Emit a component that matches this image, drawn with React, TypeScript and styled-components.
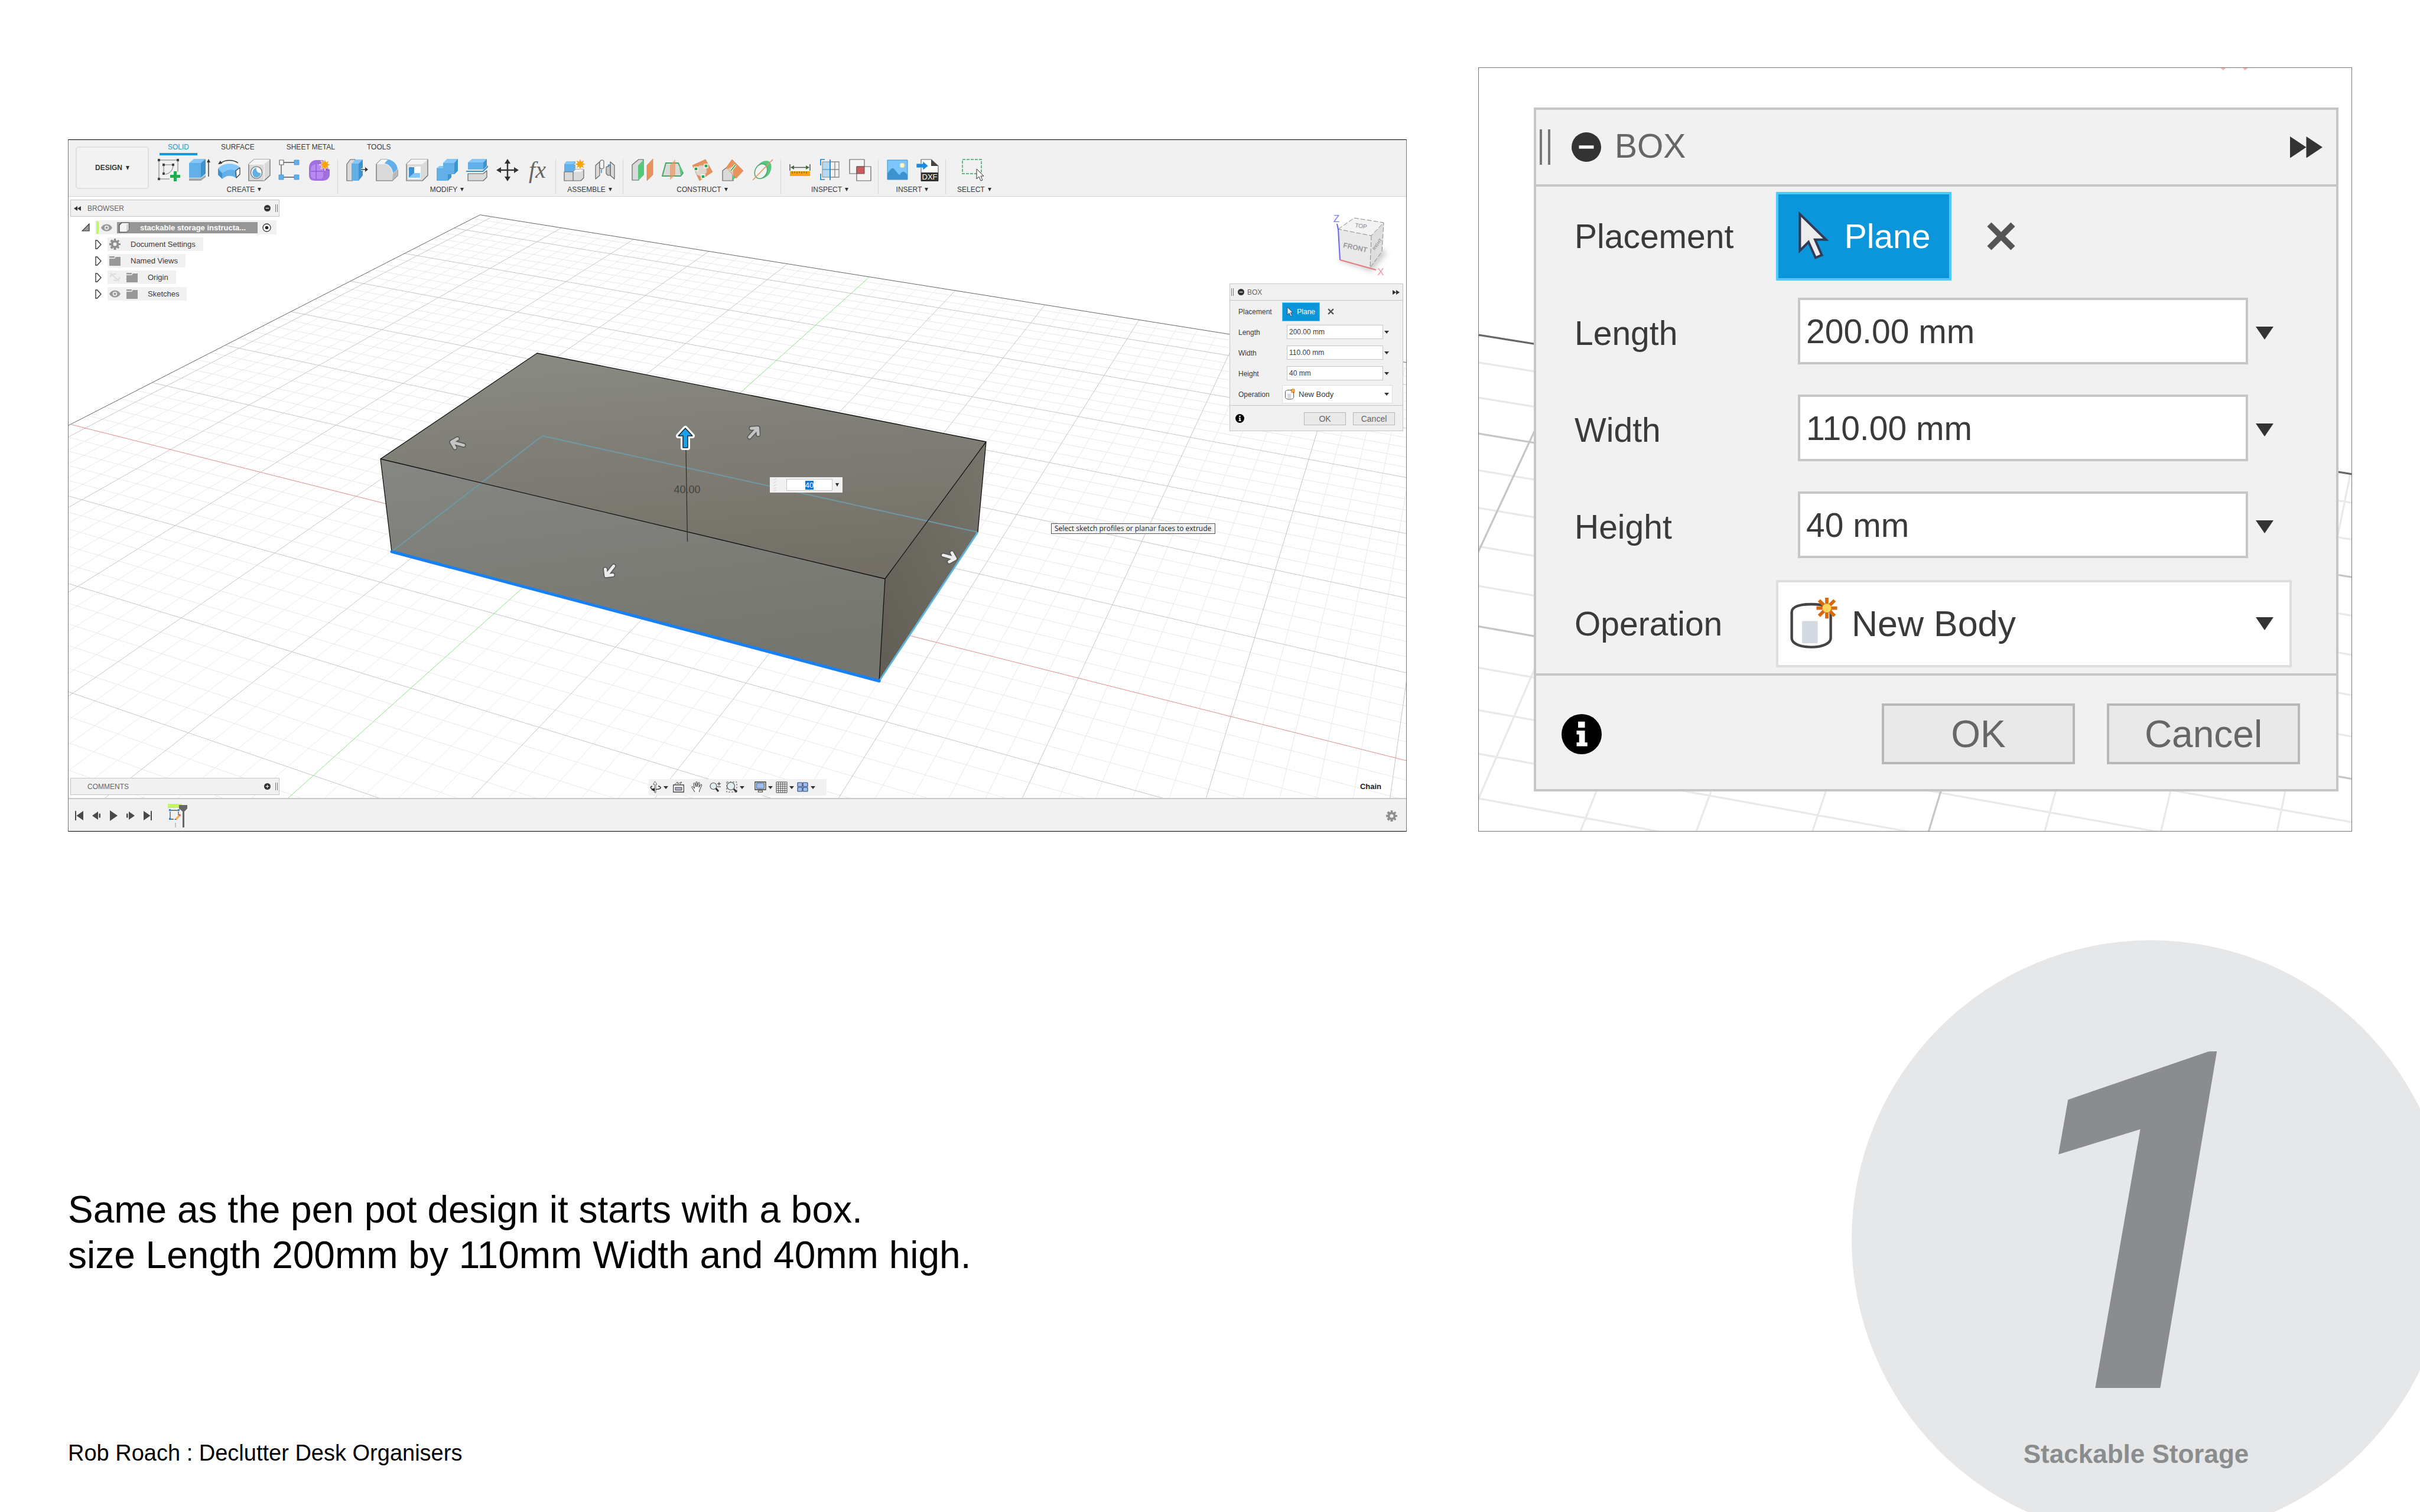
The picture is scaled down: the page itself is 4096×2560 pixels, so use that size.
import React, { useEffect, useId, useRef } from "react";
import styled, { createGlobalStyle } from "styled-components";

const GlobalStyle = createGlobalStyle`
  *, *::before, *::after { box-sizing: border-box; }
  html, body { margin: 0; background: #fff; }
  body { font-family: "Liberation Sans", Arial, sans-serif; color: #333; }
  button, input, select { font-family: inherit; color: inherit; margin: 0; }
  h1, h2, p, ul { margin: 0; padding: 0; font-weight: normal; }
  svg { display: block; }
`;

const color = {
  panel: "#f1f1f1",
  line: "#c6c6c6",
  ink: "#3a3a3a",
  blue: "#0b96db",
  icon: "#63b0e8",
  iconDark: "#3d93cf",
  iconLight: "#84c8fb",
  outline: "#666",
  fill: "#dadada",
  pale: "#f4f4f4",
  green: "#58c77e",
  orange: "#e8935c",
};

/* ------------------------------------------------------------------ slide */

const Slide = styled.main`
  position: relative;
  display: flex;
  flex-direction: column;
  min-height: 100vh;
  padding: 114px 115px 78px;
  overflow: hidden;
  background: #fff;
  color: #000;
`;

const Figures = styled.section`
  display: grid;
  grid-template-columns: 2266fr 1479fr;
  gap: 121px;
  align-items: end;
`;

const Caption = styled.p`
  margin-top: 602px;
  font-size: 64px;
  line-height: 77px;
`;

const Credit = styled.footer`
  margin-top: auto;
  font-size: 38px;
  line-height: 44px;
`;

const StepBadge = styled.aside`
  position: absolute;
  right: -51px;
  bottom: -45px;
  display: flex;
  flex-direction: column;
  align-items: center;
  width: 1013px;
  height: 1013px;
  padding: 125px 50px 0 0;
  border-radius: 50%;
  background: #e5e7e9;
  color: #8b8c8e;
  font-weight: bold;
`;

const StepNumber = styled.span`
  font-family: Roboto, Arial, sans-serif;
  font-size: 800px;
  font-style: italic;
  line-height: 720px;
`;

const StepTitle = styled.span`
  font-size: 44px;
  line-height: 50px;
`;

/* ---------------------------------------------------------- app window */

const AppWindow = styled.div`
  display: flex;
  flex-direction: column;
  aspect-ratio: 2266 / 1172;
  border: 1px solid #777;
  border-top-color: #000;
  border-bottom-color: #000;
  color: ${color.ink};
  font-size: 12px;
`;

const Toolbar = styled.header`
  display: flex;
  gap: 8px;
  height: 96px;
  padding-left: 12px;
  border-bottom: 1px solid #d4d4d4;
  background: ${color.panel};
`;

const WorkspaceButton = styled.button`
  display: flex;
  align-items: center;
  justify-content: center;
  gap: 6px;
  width: 124px;
  height: 72px;
  margin-top: 11px;
  border: 2px solid #e0e0e0;
  border-radius: 5px;
  background: #f3f3f3;
  font-size: 12px;
  font-weight: bold;
`;

const Ribbon = styled.div`
  display: flex;
  flex-direction: column;
`;

const Tabs = styled.nav`
  display: flex;
  gap: 26px;
  height: 26px;
  margin-bottom: 6px;
  padding-left: 10px;
`;

const Tab = styled.button<{ $active?: boolean }>`
  padding: 2px 14px 0;
  border: 0;
  border-bottom: 4px solid ${(p) => (p.$active ? "#1f96cf" : "transparent")};
  background: none;
  font-size: 12px;
  line-height: 20px;
  color: ${(p) => (p.$active ? "#1f96cf" : color.ink)};
`;

const Groups = styled.div`
  display: flex;
`;

const Group = styled.div`
  display: flex;
  flex-direction: column;
  height: 60px;
  padding: 0 5px 0 6px;
  border-right: 1px solid #d6d6d6;
  &:first-child { padding-left: 0; }
  &:last-child { border-right: 0; padding: 0 19px; }
`;

const GroupIcons = styled.div`
  display: flex;
`;

const ToolButton = styled.button`
  display: grid;
  place-items: center;
  width: 51px;
  height: 38px;
  padding: 0;
  border: 0;
  background: none;
`;

const GroupMenu = styled.button`
  display: flex;
  align-items: center;
  justify-content: center;
  gap: 5px;
  height: 22px;
  margin-top: 4px;
  padding: 0;
  border: 0;
  background: none;
  font-size: 12px;
  line-height: 20px;
  white-space: nowrap;
`;

const Caret = styled.i<{ $w?: number; $h?: number }>`
  width: 0;
  height: 0;
  border: solid transparent;
  border-width: ${(p) => p.$h ?? 6}px ${(p) => (p.$w ?? 6) / 2}px 0;
  border-top-color: #333;
`;

const Canvas = styled.div`
  position: relative;
  flex: 1;
  min-height: 0;
  overflow: hidden;
  background: #fff;
`;

const SceneSvg = styled.svg`
  position: absolute;
  inset: 0;
  width: 100%;
  height: 100%;
`;

const SideDock = styled.div`
  position: absolute;
  inset: 5px auto 5px 3px;
  display: flex;
  flex-direction: column;
  justify-content: space-between;
  width: 354px;
`;

const DockBar = styled.div`
  display: flex;
  align-items: center;
  height: 29px;
  padding: 0 2px 0 5px;
  border: 1px solid ${color.line};
  background: ${color.panel};
`;

const DockTitle = styled.span`
  flex: 1;
  color: #666;
`;

const DockLead = styled.span`
  display: flex;
  width: 23px;
`;

const PlainButton = styled.button`
  display: grid;
  place-items: center;
  padding: 0;
  border: 0;
  background: none;
`;

const Tree = styled.ul`
  display: flex;
  flex-direction: column;
  gap: 5px;
  margin-top: 6px;
  list-style: none;
  font-size: 13px;
`;

const TreeRow = styled.li<{ $root?: boolean }>`
  display: flex;
  align-items: center;
  gap: ${(p) => (p.$root ? 9 : 10)}px;
  height: ${(p) => (p.$root ? 24 : 23)}px;
  padding-left: ${(p) => (p.$root ? 19 : 42)}px;
`;

const RootItem = styled.div`
  display: flex;
  align-items: center;
  gap: 8px;
  height: 24px;
  padding-right: 9px;
  background: ${color.panel};
`;

const ActiveMark = styled.span`
  width: 4px;
  height: 21px;
  background: #c4f26b;
  margin: 0 -4px 0 2px;
`;

const RootLabel = styled.span`
  display: flex;
  align-items: center;
  gap: 18px;
  width: 238px;
  height: 19px;
  padding-left: 3px;
  background: #969696;
  color: #fff;
  font-weight: bold;
  white-space: nowrap;
`;

const TreeItem = styled.div`
  display: flex;
  align-items: center;
  height: 23px;
  gap: 10px;
  padding: 0 13px 0 3px;
  background: ${color.panel};
`;

const TreeText = styled.span`
  padding-left: 7px;
`;

const DialogSpot = styled.div`
  position: absolute;
  top: 147px;
  right: 5px;
  width: 294px;
`;

const NavDock = styled.div`
  position: absolute;
  right: 0;
  bottom: 4px;
  left: 0;
  display: flex;
  justify-content: center;
`;

const NavBar = styled.div`
  display: flex;
  align-items: center;
  height: 28px;
  padding: 0 16px 0 0;
  background: ${color.panel};
`;

const NavButton = styled.button<{ $menu?: boolean }>`
  display: flex;
  align-items: center;
  gap: ${(p) => (p.$menu ? 3 : 0)}px;
  justify-content: center;
  width: ${(p) => (p.$menu ? 36 : 31)}px;
  padding: 0;
  border: 0;
  background: none;
`;

const NavGap = styled.span`
  width: 12px;
`;

const SelectionHint = styled.span`
  position: absolute;
  right: 42px;
  bottom: 10px;
  font-size: 13px;
  line-height: 18px;
  font-weight: bold;
  color: #222;
`;

const Tooltip = styled.span`
  position: absolute;
  top: 553px;
  left: 1663px;
  padding: 0 6px 0 5px;
  border: 1px solid #555;
  background: #f2f2f2;
  color: #222;
  font-family: "Open Sans", "Noto Sans", sans-serif;
  font-size: 12px;
  line-height: 16px;
  white-space: nowrap;
`;

const FloatingValue = styled.label`
  position: absolute;
  top: 475px;
  left: 1187px;
  display: flex;
  align-items: center;
  gap: 5px;
  width: 123px;
  height: 26px;
  padding-left: 4px;
  background: ${color.panel};
`;

const FloatingInput = styled.input`
  width: 78px;
  height: 20px;
  margin-left: 10px;
  padding: 0;
  border: 1px solid #c8c8c8;
  outline: 0;
  background: #fff;
  font-size: 13px;
  text-align: center;
  &::selection { background: #0a78d7; color: #fff; }
`;

const Timeline = styled.footer`
  display: flex;
  align-items: center;
  height: 56px;
  padding: 2px 15px 0 3px;
  border-top: 2px solid #c8c8c8;
  background: ${color.panel};
`;

const PlayButton = styled(PlainButton)`
  width: 29px;
  height: 30px;
`;

const TimelineTrack = styled.div`
  flex: 1;
  padding-left: 20px;
`;

/* -------------------------------------------------------------- detail */

const Detail = styled.div`
  position: relative;
  overflow: hidden;
  padding: 67px 22px 67px 93px;
  border: 1px solid #777;
  background: #fff;
  color: ${color.ink};
`;

const DetailFront = styled.div`
  position: relative;
`;

/* -------------------------------------------------------------- dialog */

type Metrics = {
  text: number; option: number; action: number; line: number;
  header: number; headPad: number; gripW: number; gripH: number; gripGap: number;
  dot: number; titleGap: number; titleLift: number; arrows: number; arrowsRight: number;
  row: number; bodyPad: number; labelPad: number; label: number; indent: number;
  input: number; inputPad: number; inputLift: number; caretBox: number; caretW: number; caretH: number;
  inputRight: number; selectRight: number; select: number; selectPad: number; selectIcon: number; selectGap: number; caretRight: number;
  planeW: number; planeH: number; pointer: number; planeGap: number; clearGap: number; clear: number;
  footer: number; footTop: number; info: number; footLeft: number; footRight: number; buttonW: number; buttonH: number; buttonGap: number;
};

const compact: Metrics = {
  text: 12, option: 13, action: 14, line: 1,
  header: 28, headPad: 2, gripW: 4, gripH: 13, gripGap: 7,
  dot: 11, titleGap: 5, titleLift: 0, arrows: 12, arrowsRight: 5,
  row: 35, bodyPad: 1, labelPad: 14, label: 74, indent: 8,
  input: 24, inputPad: 3, inputLift: 1, caretBox: 12, caretW: 8, caretH: 5,
  inputRight: 21, selectRight: 17, select: 31, selectPad: 3, selectIcon: 19, selectGap: 5, caretRight: 5,
  planeW: 64, planeH: 32, pointer: 18, planeGap: 6, clearGap: 13, clear: 11,
  footer: 42, footTop: 1, info: 15, footLeft: 9, footRight: 13, buttonW: 71, buttonH: 22, buttonGap: 12,
};

const enlarged: Metrics = {
  text: 57, option: 61, action: 64, line: 4,
  header: 130, headPad: 6, gripW: 18, gripH: 60, gripGap: 36,
  dot: 50, titleGap: 23, titleLift: 4, arrows: 55, arrowsRight: 23,
  row: 164, bodyPad: 2, labelPad: 65, label: 341, indent: 37,
  input: 113, inputPad: 10, inputLift: 7, caretBox: 56, caretW: 30, caretH: 22,
  inputRight: 93, selectRight: 75, select: 148, selectPad: 16, selectIcon: 88, selectGap: 20, caretRight: 27,
  planeW: 297, planeH: 150, pointer: 84, planeGap: 27, clearGap: 59, clear: 50,
  footer: 192, footTop: 5, info: 68, footLeft: 43, footRight: 61, buttonW: 327, buttonH: 103, buttonGap: 54,
};

type M = { $m: Metrics };

const DialogFrame = styled.form<M>`
  border: ${(p) => p.$m.line}px solid ${color.line};
  background: ${color.panel};
  font-size: ${(p) => p.$m.text}px;
`;

const DialogHeader = styled.div<M>`
  display: flex;
  align-items: center;
  height: ${(p) => p.$m.header}px;
  padding: 0 ${(p) => p.$m.arrowsRight}px 0 ${(p) => p.$m.headPad}px;
  border-bottom: ${(p) => p.$m.line}px solid ${color.line};
`;

const Grip = styled.span<{ $w: number; $h: number; $line: number; $gap: number }>`
  width: ${(p) => p.$w}px;
  height: ${(p) => p.$h}px;
  margin-right: ${(p) => p.$gap}px;
  border: solid #777;
  border-width: 0 ${(p) => p.$line}px;
`;

const DialogTitle = styled.h2<M>`
  flex: 1;
  margin-left: ${(p) => p.$m.titleGap}px;
  padding-bottom: ${(p) => p.$m.titleLift}px;
  font-size: ${(p) => p.$m.text}px;
  color: #666;
`;

const DialogBody = styled.div<M>`
  padding: ${(p) => p.$m.bodyPad}px 0;
  border-bottom: ${(p) => p.$m.line}px solid ${color.line};
`;

const FieldRow = styled.div<M & { $right: number }>`
  display: flex;
  align-items: center;
  height: ${(p) => p.$m.row}px;
  padding: 0 ${(p) => p.$right}px 0 ${(p) => p.$m.labelPad}px;
`;

const FieldLabel = styled.label<M>`
  flex: none;
  width: ${(p) => p.$m.label}px;
`;

const PlaneButton = styled.button<M>`
  display: flex;
  align-items: center;
  justify-content: center;
  gap: ${(p) => p.$m.planeGap}px;
  width: ${(p) => p.$m.planeW}px;
  height: ${(p) => p.$m.planeH}px;
  padding: 0;
  border: ${(p) => p.$m.line}px solid #55c8fb;
  background: ${color.blue};
  color: #fff;
  font-size: ${(p) => p.$m.text}px;
`;

const ClearButton = styled(PlainButton)<M>`
  margin-left: ${(p) => p.$m.clearGap}px;
`;

const ValueInput = styled.input<M>`
  flex: 1;
  min-width: 0;
  height: ${(p) => p.$m.input}px;
  margin: 0 0 ${(p) => p.$m.inputLift}px ${(p) => p.$m.indent}px;
  padding: 0 ${(p) => p.$m.inputPad}px;
  border: ${(p) => p.$m.line}px solid ${color.line};
  background: #fff;
  font-size: ${(p) => p.$m.text}px;
`;

const CaretButton = styled(PlainButton)<M>`
  width: ${(p) => p.$m.caretBox}px;
  height: ${(p) => p.$m.input}px;
`;

const SelectBox = styled.div<M>`
  display: flex;
  flex: 1;
  align-items: center;
  gap: ${(p) => p.$m.selectGap}px;
  height: ${(p) => p.$m.select}px;
  padding: 0 ${(p) => p.$m.caretRight}px 0 ${(p) => p.$m.selectPad}px;
  border: ${(p) => p.$m.line}px solid #dedede;
  background: #fff;
`;

const OptionSelect = styled.select<M>`
  flex: 1;
  min-width: 0;
  padding: 0;
  border: 0;
  background: none;
  appearance: none;
  font-size: ${(p) => p.$m.option}px;
`;

const DialogFooter = styled.div<M>`
  display: flex;
  align-items: center;
  gap: ${(p) => p.$m.buttonGap}px;
  height: ${(p) => p.$m.footer}px;
  padding: ${(p) => p.$m.footTop}px ${(p) => p.$m.footRight}px 0 ${(p) => p.$m.footLeft}px;
`;

const InfoSlot = styled.span`
  flex: 1;
`;

const ActionButton = styled.button<M>`
  width: ${(p) => p.$m.buttonW}px;
  height: ${(p) => p.$m.buttonH}px;
  padding: 0;
  border: ${(p) => p.$m.line}px solid #b8b8b8;
  background: #e9e9e9;
  color: #666;
  font-size: ${(p) => p.$m.action}px;
  line-height: 1;
`;

const Dot = ({ size, sign, fill = "#333" }: { size: number; sign: "+" | "-"; fill?: string }) => (
  <svg width={size} height={size} viewBox="0 0 12 12">
    <circle cx="6" cy="6" r="6" fill={fill} />
    <path d={sign === "+" ? "M3 6h6M6 3v6" : "M3 6h6"} stroke="#fff" strokeWidth="1.3" />
  </svg>
);

const Info = ({ size }: { size: number }) => (
  <svg width={size} height={size} viewBox="0 0 16 16">
    <circle cx="8" cy="8" r="8" fill="#000" />
    <path d="M6.6 3h2.7v2.4H6.6zM6 6.6h3.3v4.7h1v1.5H6v-1.5h1V8.1H6z" fill="#fff" />
  </svg>
);

const Pointer = ({ size }: { size: number }) => (
  <svg width={(size * 12) / 19} height={size} viewBox="0 0 12 19">
    <path d="M1 1v14l3.300-3.300 2.700 6 2.400-1-2.600-5.900H11z" fill="#ececec" stroke="#333a55" strokeWidth=".9" />
  </svg>
);

const NewBody = ({ size }: { size: number }) => (
  <svg width={size} height={size} viewBox="0 0 19 20">
    <path d="M1 5.500C1 3.500 4 2.500 8.500 2.500S16 3.500 16 5.500v10c0 2-3 3.500-7.500 3.500S1 17.500 1 15.500z" fill="#fff" stroke="#444" strokeWidth="1" />
    <path d="M5 9h6v8.500H5z" fill="#d5d9e2" />
    <path d="M14.500 0v8M10.500 4h8M11.500 1l6 6M17.500 1l-6 6" stroke="#d9690a" strokeWidth="1.300" />
    <circle cx="14.500" cy="4" r="1.700" fill="#ffd35c" />
  </svg>
);

const DoubleArrow = ({ size, flip }: { size: number; flip?: boolean }) => (
  <svg width={size} height={(size * 8) / 12} viewBox="0 0 12 8">
    <path d={flip ? "M6 0v8L0 4zM12 0v8L6 4z" : "M0 0v8l6-4zM6 0v8l6-4z"} fill="#333" />
  </svg>
);

function BoxDialog({ m }: { m: Metrics }) {
  const id = useId();
  const values = [
    ["Length", "200.00 mm"],
    ["Width", "110.00 mm"],
    ["Height", "40 mm"],
  ];
  return (
    <DialogFrame $m={m} onSubmit={(e) => e.preventDefault()}>
      <DialogHeader $m={m}>
        <Grip $w={m.gripW} $h={m.gripH} $line={m.line} $gap={m.gripGap} />
        <PlainButton type="button" aria-label="Collapse"><Dot size={m.dot} sign="-" /></PlainButton>
        <DialogTitle $m={m}>BOX</DialogTitle>
        <PlainButton type="button" aria-label="Expand"><DoubleArrow size={m.arrows} /></PlainButton>
      </DialogHeader>
      <DialogBody $m={m}>
        <FieldRow $m={m} $right={m.selectRight}>
          <FieldLabel $m={m} htmlFor={`${id}-plane`}>Placement</FieldLabel>
          <PlaneButton $m={m} id={`${id}-plane`} type="button"><Pointer size={m.pointer} />Plane</PlaneButton>
          <ClearButton $m={m} type="button" aria-label="Clear placement">
            <svg width={m.clear} height={m.clear} viewBox="0 0 10 10"><path d="M1 1l8 8M9 1l-8 8" stroke="#555" strokeWidth="2" /></svg>
          </ClearButton>
        </FieldRow>
        {values.map(([name, value]) => (
          <FieldRow $m={m} $right={m.inputRight} key={name}>
            <FieldLabel $m={m} htmlFor={`${id}-${name}`}>{name}</FieldLabel>
            <ValueInput $m={m} id={`${id}-${name}`} defaultValue={value} />
            <CaretButton $m={m} type="button" aria-label={`${name} options`}><Caret $w={m.caretW} $h={m.caretH} /></CaretButton>
          </FieldRow>
        ))}
        <FieldRow $m={m} $right={m.selectRight}>
          <FieldLabel $m={m} htmlFor={`${id}-op`}>Operation</FieldLabel>
          <SelectBox $m={m}>
            <NewBody size={m.selectIcon} />
            <OptionSelect $m={m} id={`${id}-op`}><option>New Body</option></OptionSelect>
            <Caret $w={m.caretW} $h={m.caretH} />
          </SelectBox>
        </FieldRow>
      </DialogBody>
      <DialogFooter $m={m}>
        <InfoSlot><Info size={m.info} /></InfoSlot>
        <ActionButton $m={m} type="submit">OK</ActionButton>
        <ActionButton $m={m} type="button">Cancel</ActionButton>
      </DialogFooter>
    </DialogFrame>
  );
}

/* --------------------------------------------------------------- scene */

/* Perspective of the ground plane; x and y are millimetres from the origin. */
const ground = (x: number, y: number): [number, number] => {
  const u = (x + 60) / 200;
  const v = (y + 30) / 110;
  const w = -0.12904 * u + 0.15034 * v + 1;
  return [
    (633.58 * u + 393.97 * v + 662.5) / w,
    (70.7 * u - 84.42 * v + 933.6) / w,
  ];
};

const segment = (x1: number, y1: number, x2: number, y2: number) => {
  const a = ground(x1, y1);
  const b = ground(x2, y2);
  return `M${a[0].toFixed(1)} ${a[1].toFixed(1)}L${b[0].toFixed(1)} ${b[1].toFixed(1)}`;
};

const EDGE = { left: -259, right: 420, back: 328, front: -210 };

const gridLines = (major: boolean) => {
  const d: string[] = [];
  for (let x = -250; x <= EDGE.right; x += 10) {
    if (x !== 0 && (x % 50 === 0) === major) d.push(segment(x, EDGE.front, x, EDGE.back));
  }
  for (let y = -200; y <= EDGE.back; y += 10) {
    if (y !== 0 && (y % 50 === 0) === major) d.push(segment(EDGE.left, y, EDGE.right, y));
  }
  return d.join("");
};

const MINOR = gridLines(false);
const MAJOR = gridLines(true);

const Ground = ({ weight }: { weight: number }) => (
  <g fill="none" strokeWidth={weight}>
    <path d={MINOR} stroke="#e9e9e9" />
    <path d={MAJOR} stroke="#c6c6c6" />
    <path d={segment(EDGE.left, EDGE.front, EDGE.left, EDGE.back) + segment(EDGE.left, EDGE.back, EDGE.right, EDGE.back)} stroke="#666" />
    <path d={segment(EDGE.left, 0, EDGE.right, 0)} stroke="#e58c8c" />
    <path d={segment(0, EDGE.front, 0, EDGE.back)} stroke="#86e286" />
  </g>
);

const AxisX = () => <text x="2337" y="466" textAnchor="middle" fontSize="17" fill="#f5989c">X</text>;

const Handle = ({ x, y, angle, tone = "#ececec" }: { x: number; y: number; angle: number; tone?: string }) => (
  <g transform={`translate(${x} ${y}) rotate(${angle})`} fill="none" strokeLinecap="round" strokeLinejoin="round">
    <path d="M-11 0H10M2-8L10 0L2 8" stroke="#555" strokeWidth="8" />
    <path d="M-11 0H10M2-8L10 0L2 8" stroke={tone} strokeWidth="5" />
  </g>
);

function ModelScene() {
  return (
    <SceneSvg viewBox="116 333 2264 1018" preserveAspectRatio="none">
      <defs>
        <linearGradient id="face-top" x1="0.3" y1="0" x2="0.5" y2="1">
          <stop offset="0" stopColor="#898a82" /><stop offset="1" stopColor="#736f66" />
        </linearGradient>
        <linearGradient id="face-front" x1="0" y1="0" x2="0.3" y2="1">
          <stop offset="0" stopColor="#858782" /><stop offset="1" stopColor="#75766f" />
        </linearGradient>
        <linearGradient id="face-side" x1="1" y1="0" x2="0" y2="1">
          <stop offset="0" stopColor="#78756c" /><stop offset="1" stopColor="#615d54" />
        </linearGradient>
        <filter id="cube-shadow" x="-50%" y="-50%" width="200%" height="200%"><feGaussianBlur stdDeviation="4" /></filter>
      </defs>
      <Ground weight={1} />

      <g strokeLinejoin="round">
        <path d="M644 777L909 598L1669 748L1498 980Z" fill="url(#face-top)" />
        <path d="M644 777L1498 980L1488 1153L663 934Z" fill="url(#face-front)" />
        <path d="M1498 980L1669 748L1655 901L1488 1153Z" fill="url(#face-side)" />
        <path d="M663 934L918 738L1655 901" fill="none" stroke="#6f9aa5" strokeWidth="2" />
        <path d="M663 934L644 777L909 598L1669 748L1655 901M644 777L1498 980L1669 748M1498 980L1488 1153" fill="none" stroke="#111" strokeWidth="1.300" />
        <path d="M1488 1153L1655 901" stroke="#5db4dd" strokeWidth="3" />
        <path d="M663 934L1488 1153" stroke="#1680f4" strokeWidth="5" strokeLinecap="round" />
      </g>
      <path d="M1161 762L1163.500 917" stroke="#2c2a26" strokeWidth="1.200" />
      <text x="1163" y="835" textAnchor="middle" fontSize="18" fill="#45433d">40.00</text>
      <Handle x={774} y={751} angle={195} tone="#c4c4c2" />
      <Handle x={1032} y={967} angle={128} />
      <Handle x={1276} y={732} angle={-48} tone="#c4c4c2" />
      <Handle x={1607} y={943} angle={16} />
      <g strokeLinejoin="round" transform="translate(1160 741)">
        <path d="M0-16L12-3H4V17H-4V-3H-12Z" stroke="#fff" strokeWidth="8" fill="#fff" />
        <path d="M0-16L12-3H4V17H-4V-3H-12Z" fill="#18a0e8" stroke="#222" strokeWidth="1.500" />
      </g>

      <g>
        <path d="M2262 440L2322 460L2348 428L2330 418Z" fill="#bbb" opacity=".7" filter="url(#cube-shadow)" />
        <path d="M2265 388L2292 369L2342 377L2321 399Z" fill="#f3f3f3" />
        <path d="M2265 388L2321 399L2319 453L2268 440Z" fill="#e9e9ea" />
        <path d="M2321 399L2342 377L2339 426L2319 453Z" fill="#dedede" />
        <path d="M2265 388L2292 369L2342 377L2321 399ZM2321 399L2319 453L2339 426L2342 377" fill="none" stroke="#8a8a8a" strokeDasharray="8 3" />
        <path d="M2263 379L2265 388L2268 440" fill="none" stroke="#6a66ea" strokeWidth="2" />
        <path d="M2268 440L2329 457" stroke="#e8777c" strokeWidth="2" />
        <text x="2262" y="376" textAnchor="middle" fontSize="17" fill="#8380f2">Z</text>
        <AxisX />
        <text transform="translate(2293 423) rotate(12)" textAnchor="middle" fontSize="12" fontWeight="bold" fill="#9a9a9c">FRONT</text>
        <text transform="translate(2303 386) rotate(9)" textAnchor="middle" fontSize="10" fill="#888">TOP</text>
        <text transform="translate(2333 415) rotate(-55)" textAnchor="middle" fontSize="7" fontWeight="bold" fill="#999">RIGHT</text>
      </g>
    </SceneSvg>
  );
}

const DetailScene = () => (
  <SceneSvg viewBox="2060.6 464.9 319.3 279.3" preserveAspectRatio="none">
    <Ground weight={0.7} />
    <path d="M2332 464L2337 468M2342 464L2337 468" stroke="#f5b5b8" strokeWidth="1.500" strokeDasharray="2 9" />
  </SceneSvg>
);

/* --------------------------------------------------------------- icons */

const burst = (cx: number, cy: number, r: number) =>
  Array.from({ length: 16 }, (_, i) => {
    const rad = i % 2 ? r * 0.5 : r;
    const a = (i * Math.PI) / 8;
    return `${(cx + rad * Math.sin(a)).toFixed(1)},${(cy - rad * Math.cos(a)).toFixed(1)}`;
  }).join(" ");

const o = { stroke: color.outline, strokeWidth: 1.2, strokeLinejoin: "round" as const };

const icons: Record<string, React.ReactNode> = {
  sketch: (
    <g>
      <path d="M4 2H33M2 4V33M34 4V22M4 34H20" fill="none" stroke="#777" />
      <path d="M10 12V24M12 10H24M26 12C25 20 20 25 13 26" fill="none" stroke="#777" />
      <path d="M0 0h4v4H0zM32 0h4v4H32zM0 32h4v4H0zM8 8h4v4H8zM24 8h4v4H24zM8 23h4v4H8z" fill="#444" />
      <path d="M27 21h5v6h6v5H32v6H27V32H21V27h6z" fill="#22ab52" />
    </g>
  ),
  extrude: (
    <g>
      <path d="M2 33H22L30 27V31L22 37H2Z" fill="#a5a5a5" />
      <path d="M2 7L10 0H30L22 7Z" fill={color.iconLight} />
      <path d="M2 7H22V32H2Z" fill={color.icon} />
      <path d="M22 7L30 0V25L22 32Z" fill={color.iconDark} />
      <path d="M35 4V30" stroke="#333" strokeWidth="1.400" /><path d="M35 0L38 6H32Z" fill="#333" />
    </g>
  ),
  revolve: (
    <g>
      <path d="M5 7C12 1 26 1 34 7" fill="none" stroke="#333" strokeWidth="1.400" /><path d="M0 9L4 3L7 8Z" fill="#333" />
      <path d="M0 16C9 6 28 6 37 14L30 22C22 17 14 18 7 24Z" fill={color.iconLight} />
      <path d="M0 16L7 24V34L0 27Z" fill={color.iconDark} /><path d="M7 24C14 18 22 17 30 20V32C22 27 14 28 7 34Z" fill={color.icon} />
      <path d="M30 20L37 15V26L31 32Z" fill="#fff" {...o} stroke="#333" />
    </g>
  ),
  hole: (
    <g>
      <path d="M1 9L10 1H37V28L27 37H1Z" fill={color.fill} {...o} />
      <path d="M1 9L10 1H37L27 9Z" fill={color.pale} /><path d="M1 9H27V37" fill="none" stroke="#fff" />
      <ellipse cx="14" cy="23" rx="9.500" ry="10" fill="#fff" {...o} />
      <path d="M14 15C6 17 5 27 11 31C17 33 22 28 21 24C16 24 13 20 14 15Z" fill={color.icon} />
    </g>
  ),
  pattern: (
    <g>
      <path d="M9 6H27M5 10V27M9 31H27" stroke="#555" strokeWidth="1.300" />
      <rect x="2" y="2" width="7" height="8" fill="#fff" {...o} />
      <path d="M27 2h8v8h-8zM1 27h8v8H1zM27 27h8v8h-8z" fill={color.icon} stroke={color.iconDark} strokeWidth=".8" />
    </g>
  ),
  form: (
    <g>
      <path d="M1 16C1 7 6 2 14 2H22C27 2 29 6 30 12L36 18V28C35 33 31 37 24 37H11C4 37 1 33 1 28Z" fill="#a06fe0" />
      <path d="M4 17C5 11 9 9 13 9H21C25 10 25 14 25 17V28C25 33 22 34 18 34H11C6 34 4 30 4 26Z" fill="#b98af2" />
      <path d="M13 9V34M4 21H25M25 16L35 20" stroke="#7a47c4" fill="none" />
      <polygon points={burst(28, 10, 10)} fill="#f7a409" stroke="#f1f1f1" strokeWidth=".8" />
    </g>
  ),
  press: (
    <g>
      <path d="M2 9L8 1H16L12 37H2Z" fill={color.fill} {...o} />
      <path d="M10 8L17 1H29L22 8Z" fill={color.iconLight} /><path d="M10 8H22V37H10Z" fill={color.icon} />
      <path d="M22 8L29 1V28L22 37Z" fill={color.iconDark} />
      <path d="M26 18H34" stroke="#fff" strokeWidth="4" /><path d="M26 18H34" stroke="#333" strokeWidth="1.500" /><path d="M33 14L38 18L33 22Z" fill="#333" />
    </g>
  ),
  fillet: (
    <g>
      <path d="M1 9L9 1H20C30 3 37 10 37 20V28L28 37H1Z" fill={color.fill} {...o} />
      <path d="M1 9L9 1H20L14 9Z" fill={color.pale} />
      <path d="M14 8L21 0C32 3 38 12 37 18L29 25C28 16 23 9 14 8Z" fill={color.icon} stroke="#fff" strokeWidth=".8" />
      <path d="M29 25L37 18V28L28 37Z" fill="#b9b9b9" />
    </g>
  ),
  shell: (
    <g>
      <path d="M1 9L9 1H37V28L28 37H1Z" fill={color.fill} {...o} /><path d="M1 9L9 1H37L28 9Z" fill={color.pale} />
      <path d="M4 13H25V34H4Z" fill="#fff" /><path d="M5 14H14V24L5 32Z" fill={color.iconDark} /><path d="M5 32L14 24H24V32Z" fill={color.iconLight} />
    </g>
  ),
  combine: (
    <g>
      <path d="M1 16L6 12H12V7L19 0H37V20L31 26H26V31L20 37H1Z" fill={color.icon} />
      <path d="M12 7L19 0H37L31 7Z" fill={color.iconLight} /><path d="M31 7L37 0V20L31 26Z" fill={color.iconDark} />
      <path d="M1 16L6 12H12V16Z" fill={color.iconLight} /><path d="M20 26H26V31L20 37Z" fill={color.iconDark} />
    </g>
  ),
  split: (
    <g>
      <path d="M3 6L10 0H35L29 6Z" fill={color.iconLight} /><path d="M3 6H29V18H3Z" fill={color.icon} /><path d="M29 6L35 0V12L29 18Z" fill={color.iconDark} />
      <path d="M0 20H28L37 11V14L29 22H0Z" fill="#2e93c4" />
      <path d="M3 25H29L35 20V31L29 37H3Z" fill={color.fill} {...o} />
    </g>
  ),
  move: (
    <g fill="#333">
      <path d="M17.800 6h2.400v26h-2.400z" /><path d="M6 17.800h26v2.400H6z" />
      <path d="M19 0L24 8H14ZM19 38L14 30H24ZM0 19L8 14V24ZM38 19L30 24V14Z" />
    </g>
  ),
  component: (
    <g>
      <path d="M1 9L5 4H20V16L16 22H1Z" fill={color.icon} /><path d="M1 9L5 4H20L16 9Z" fill={color.iconLight} />
      <path d="M1 22H16V37H1ZM16 22L20 18H34V32L29 37H16Z" fill={color.fill} {...o} />
      <path d="M16 22L20 18H34L29 22Z" fill={color.pale} />
      <polygon points={burst(28, 9, 10)} fill="#f7a409" stroke="#f1f1f1" strokeWidth=".8" />
    </g>
  ),
  joint: (
    <g {...o} fill={color.fill}>
      <path d="M3 11L10 5L10 28L3 34Z" /><path d="M10 5C12 1 17 1 17 5V15C15 18 12 17 10 15Z" fill={color.pale} />
      <path d="M35 11L28 5V28L35 34Z" /><path d="M21 14L28 10V28L24 28L21 25Z" fill="#c6c6c6" />
      <path d="M13 18V24M25 9V14" stroke={color.iconDark} strokeWidth="1.600" />
    </g>
  ),
  offsetPlane: (
    <g>
      <path d="M2 10L13 1H21L13 36H2Z" fill={color.fill} {...o} /><path d="M12 11L22 1V27L12 37Z" fill={color.green} />
      <path d="M27 11L37 0V27L27 37Z" fill={color.orange} stroke="#c9763f" strokeWidth=".6" />
    </g>
  ),
  midPlane: (
    <g>
      <path d="M8 7H29L37 24L33 29H2Z" fill={color.fill} stroke="#48a468" strokeWidth="2" />
      <path d="M30 8L37 22L33 28Z" fill={color.green} />
      <path d="M15 10L24 1V27L15 36Z" fill={color.orange} opacity=".65" />
    </g>
  ),
  pointPlane: (
    <g>
      <path d="M2 11L24 1L36 22L14 37Z" fill={color.orange} stroke="#c9763f" strokeWidth=".6" />
      <path d="M8 17L14 11H26V23L19 31L8 26Z" fill="#e0d5cf" stroke="#c8b9b0" />
      <path d="M5 14h6v6H5zM22 9h6v6h-6zM17 27h6v6h-6z" fill="#22ab52" stroke="#fff" strokeWidth="1.300" />
    </g>
  ),
  edgePlane: (
    <g>
      <path d="M2 20L11 13H20V37H2Z" fill={color.fill} {...o} /><path d="M18 26L26 18V30L18 37Z" fill={color.green} />
      <path d="M8 15L18 1L37 20L25 33Z" fill={color.orange} stroke="#c9763f" strokeWidth=".6" />
      <path d="M9 17L20 13V32L18 25Z" fill="#e0d5cf" opacity=".7" />
      <path d="M16 20L24 10" stroke="#fff" strokeWidth="4" /><path d="M16 20L24 10" stroke="#22ab52" strokeWidth="1.800" />
    </g>
  ),
  axis: (
    <g>
      <path d="M5 22C8 9 20 1 29 4C38 9 33 28 22 32C14 36 3 34 5 22Z" fill={color.green} />
      <ellipse cx="16" cy="21" rx="10" ry="13" transform="rotate(28 16 21)" fill="#f4f4f4" stroke="#48a468" strokeWidth="1.400" />
      <path d="M2 36L36 1" stroke={color.orange} strokeWidth="1.600" />
    </g>
  ),
  measure: (
    <g>
      <path d="M2 9V20M36 9V20M4 14.500H34" stroke="#555" strokeWidth="1.500" /><path d="M3 14.500L9 11V18ZM35 14.500L29 11V18Z" fill="#446b3c" />
      <path d="M2 21H36V29H2Z" fill="#f7a409" /><path d="M6 21v4M10 21v3M14 21v4M18 21v3M22 21v4M26 21v3M30 21v4" stroke="#7b5308" />
    </g>
  ),
  section: (
    <g>
      <path d="M19 5H34V31H19M19 18H34M27 5V31" fill="none" stroke="#888" strokeWidth="1.300" />
      <path d="M6 5H19V31H6Z" fill="#b5d9ef" stroke="#888" /><path d="M6 18H19" stroke="#2e93c4" />
      <path d="M10 1H3V11M10 35H3V25M19 1V36" fill="none" stroke="#1786cc" strokeWidth="1.700" />
    </g>
  ),
  interference: (
    <g>
      <path d="M1 1H26V25H1Z" fill={color.pale} {...o} /><path d="M13 13H37V37H13Z" fill={color.pale} {...o} />
      <path d="M13 13H26V25H13Z" fill="#cf5a5c" stroke="#555" />
    </g>
  ),
  image: (
    <g>
      <path d="M2 2H36V35H2Z" fill="#7cc6fb" stroke="#3a8fcb" /><circle cx="27" cy="11" r="4" fill="#fdf8cd" stroke="#e6d999" />
      <path d="M2 25C6 19 9 15 12 16C17 20 20 27 23 27C26 21 30 19 36 27V35H2Z" fill={color.iconDark} />
    </g>
  ),
  dxf: (
    <g>
      <path d="M8 1H25L37 12V37H8Z" fill="#fff" {...o} /><path d="M25 1V12H37Z" fill="#444" /><path d="M8 23H37V38H8Z" fill="#333" />
      <text x="22.500" y="35" textAnchor="middle" fontSize="13" fill="#fff">DXF</text>
      <path d="M0 8H11V4L20 12L11 19V15H0Z" fill="#1d8ce0" stroke="#f1f1f1" strokeWidth=".7" />
    </g>
  ),
  select: (
    <g>
      <path d="M2 1H34V25H2Z" fill="none" stroke="#3aa566" strokeWidth="1.500" strokeDasharray="5 2" />
      <path d="M26 17V34L30 30L33 37L36 36L33 29H38Z" fill="#fff" stroke="#333" />
    </g>
  ),
};

const FormulaMark = styled.span`
  font-family: "Liberation Serif", "Times New Roman", serif;
  font-size: 40px;
  font-style: italic;
  line-height: 38px;
  color: #666;
`;

const Icon = ({ name }: { name: string }) =>
  name === "fx" ? (
    <FormulaMark>fx</FormulaMark>
  ) : (
    <svg width="38" height="38" viewBox="0 0 38 38">{icons[name]}</svg>
  );

const ribbon: { menu: string; tools: string[] }[] = [
  { menu: "CREATE", tools: ["sketch", "extrude", "revolve", "hole", "pattern", "form"] },
  { menu: "MODIFY", tools: ["press", "fillet", "shell", "combine", "split", "move", "fx"] },
  { menu: "ASSEMBLE", tools: ["component", "joint"] },
  { menu: "CONSTRUCT", tools: ["offsetPlane", "midPlane", "pointPlane", "edgePlane", "axis"] },
  { menu: "INSPECT", tools: ["measure", "section", "interference"] },
  { menu: "INSERT", tools: ["image", "dxf"] },
  { menu: "SELECT", tools: ["select"] },
];

const Eye = () => (
  <svg width="19" height="13" viewBox="0 0 19 13">
    <path d="M0 6.500C4-1.500 15-1.500 19 6.500C15 14.500 4 14.500 0 6.500Z" fill="#999" />
    <circle cx="9.500" cy="6.500" r="3.800" fill="#eee" /><circle cx="9.500" cy="6.500" r="2" fill="#999" />
  </svg>
);

const HiddenEye = () => (
  <svg width="19" height="15" viewBox="0 0 19 15">
    <path d="M1 7C4 2 9 1 12 2M18 7C15 13 10 14 7 12M2 1L17 14" fill="none" stroke="#dcdcdc" strokeWidth="2" />
  </svg>
);

const Folder = () => (
  <svg width="19" height="16" viewBox="0 0 19 16">
    <path d="M0 0H9V2.500H0Z" fill="#999" /><path d="M0 4H9L11 1H19V16H0Z" fill="#999" />
  </svg>
);

const Gear = ({ size }: { size: number }) => (
  <svg width={size} height={size} viewBox="0 0 20 20">
    {[0, 45, 90, 135].map((a) => (
      <path key={a} d="M8.300 0h3.400l.5 20H7.800z" transform={`rotate(${a} 10 10)`} fill="#8f8f8f" />
    ))}
    <circle cx="10" cy="10" r="5.200" fill="#f1f1f1" stroke="#8f8f8f" strokeWidth="4" />
  </svg>
);

const Expander = () => (
  <svg width="11" height="16" viewBox="0 0 11 16"><path d="M1 1H3.500L10 8L3.500 15H1Z" fill="#fff" stroke="#333" strokeWidth="1.300" /></svg>
);

const treeItems = [
  { name: "Document Settings", icons: [<Gear key="g" size={19} />] },
  { name: "Named Views", icons: [<Folder key="f" />] },
  { name: "Origin", icons: [<HiddenEye key="e" />, <Folder key="f" />] },
  { name: "Sketches", icons: [<Eye key="e" />, <Folder key="f" />] },
];

const nav: { name: string; menu?: boolean; gap?: boolean; art: React.ReactNode }[] = [
  { name: "Orbit", menu: true, art: <g><path d="M4 8C-2 10 3 14 9 13.500C18 13.500 22 10 14 8" fill="none" stroke="#333" strokeWidth="1.500" /><path d="M8.500 0L12 5H10V19H8V5H5.500Z" fill="#fff" stroke="#444" strokeWidth=".8" /><path d="M2 14L8 11V17Z" fill="#222" /></g> },
  { name: "Look at", art: <g><path d="M3 5L8 1V4L15 1L12 5" fill="none" stroke="#555" /><path d="M.7 6H18.300V18H.7Z" fill="#fff" stroke="#444" strokeWidth="1.300" /><path d="M4 10H15V15H4Z" fill="#aaaec2" stroke="#444" /></g> },
  { name: "Pan", art: <path d="M6 18L1 10C1 8 3 8 4 10L5.500 12L4 4C4 2 6 2 6.500 4L8 9V2C8 0 10 0 10.200 2V9L12 2.500C12.500 1 14.500 1.500 14 3.500L13 10L16 5.500C17 4.500 18.500 5.500 17.500 7L14 15L13.500 18" fill="#fff" stroke="#333" /> },
  { name: "Zoom", art: <g><path d="M10 11L15 17" stroke="#333" strokeWidth="3" /><circle cx="6.500" cy="8" r="5.500" fill="#e0eeee" stroke="#555" strokeWidth="1.200" /><path d="M13 4H19M16 1V7M13 9H19" stroke="#222" /></g> },
  { name: "Zoom window", menu: true, art: <g><path d="M1 1H18V18H1Z" fill="none" stroke="#555" strokeDasharray="3 2" /><path d="M13 13L18 18" stroke="#333" strokeWidth="3" /><circle cx="8" cy="8" r="6.500" fill="#e0eeee" stroke="#555" strokeWidth="1.200" /></g> },
  { name: "Display settings", menu: true, gap: true, art: <g><path d="M1 1H19V14H1Z" fill="#fff" stroke="#333" strokeWidth="1.300" /><path d="M3.500 3H16.500V12H3.500Z" fill="#9fbde8" stroke="#345b96" /><path d="M7 15H13L14 18H6Z" fill="#fff" stroke="#333" /></g> },
  { name: "Grid and snaps", menu: true, art: <g><path d="M1 1H19V19H1Z" fill="#fff" stroke="#444" /><path d="M4.600 1V19M8.200 1V19M11.800 1V19M15.400 1V19M1 4.600H19M1 8.200H19M1 11.800H19M1 15.400H19" stroke="#555" /></g> },
  { name: "Viewports", menu: true, art: <g fill="#9fbde8" stroke="#2c4a7c" strokeWidth="1.200"><rect x="1" y="2" width="8" height="7" rx="1" /><rect x="10" y="2" width="8" height="7" rx="1" /><rect x="1" y="10" width="8" height="7" rx="1" /><rect x="10" y="10" width="8" height="7" rx="1" /></g> },
];

const playback = [
  { name: "Go to start", d: "M1 0h2v16H1zM3.500 8L15 0v16z" },
  { name: "Step back", d: "M1 8L11 1v14zM12.500 4.500h2.500v7h-2.500z" },
  { name: "Play", d: "M2 -1L15 8L2 17z" },
  { name: "Step forward", d: "M1 4.500h2.500v7H1zM5 1l10 7l-10 7z" },
  { name: "Go to end", d: "M1 0L12.500 8L1 16zM13 0h2v16h-2z" },
];

function ModelWindow() {
  const value = useRef<HTMLInputElement>(null);
  useEffect(() => {
    value.current?.focus({ preventScroll: true });
    value.current?.select();
  }, []);
  return (
    <AppWindow>
      <Toolbar>
        <WorkspaceButton>DESIGN <Caret $w={7} $h={7} /></WorkspaceButton>
        <Ribbon>
          <Tabs>
            <Tab $active>SOLID</Tab>
            <Tab>SURFACE</Tab>
            <Tab>SHEET METAL</Tab>
            <Tab>TOOLS</Tab>
          </Tabs>
          <Groups>
            {ribbon.map((g) => (
              <Group key={g.menu}>
                <GroupIcons>
                  {g.tools.map((t) => (
                    <ToolButton key={t} aria-label={t}><Icon name={t} /></ToolButton>
                  ))}
                </GroupIcons>
                <GroupMenu>{g.menu}<Caret $w={7} $h={6} /></GroupMenu>
              </Group>
            ))}
          </Groups>
        </Ribbon>
      </Toolbar>

      <Canvas>
        <ModelScene />
        <SideDock>
          <div>
            <DockBar>
              <DockLead><DoubleArrow size={12} flip /></DockLead>
              <DockTitle>BROWSER</DockTitle>
              <PlainButton aria-label="Collapse browser"><Dot size={11} sign="-" /></PlainButton>
              <Grip $w={0} $h={0} $line={0} $gap={8} />
              <Grip $w={4} $h={13} $line={1} $gap={0} />
            </DockBar>
            <Tree>
              <TreeRow $root>
                <svg width="14" height="14" viewBox="0 0 14 14"><path d="M13 1V13H1Z" fill="#999" stroke="#333" strokeWidth="1.200" /></svg>
                <RootItem>
                  <ActiveMark />
                  <Eye />
                  <RootLabel>
                    <svg width="18" height="18" viewBox="0 0 18 18"><path d="M1 5L5 1H17V13L13 17H1Z" fill="#f4f4f4" stroke="#444" strokeWidth="1.200" /><path d="M13 17V5L17 1V13Z" fill="#d2d4da" /></svg>
                    stackable storage instructa...
                  </RootLabel>
                  <svg width="15" height="15" viewBox="0 0 15 15"><circle cx="7.500" cy="7.500" r="6.500" fill="#fff" stroke="#333" strokeWidth="1.300" /><circle cx="7.500" cy="7.500" r="2.800" fill="#222" /></svg>
                </RootItem>
              </TreeRow>
              {treeItems.map((t) => (
                <TreeRow key={t.name}>
                  <Expander />
                  <TreeItem>{t.icons}<TreeText>{t.name}</TreeText></TreeItem>
                </TreeRow>
              ))}
            </Tree>
          </div>
          <DockBar>
            <DockLead />
            <DockTitle>COMMENTS</DockTitle>
            <PlainButton aria-label="Add comment"><Dot size={11} sign="+" /></PlainButton>
            <Grip $w={0} $h={0} $line={0} $gap={8} />
            <Grip $w={4} $h={13} $line={1} $gap={0} />
          </DockBar>
        </SideDock>

        <DialogSpot><BoxDialog m={compact} /></DialogSpot>

        <FloatingValue>
          <svg width="9" height="22" viewBox="0 0 9 22"><path d="M2 3l5-3M2 8l5-3M2 13l5-3M2 18l5-3M2 22l5-3" stroke="#d2d2d2" /></svg>
          <FloatingInput ref={value} defaultValue="40" aria-label="Height value" />
          <Caret $w={7} $h={6} />
        </FloatingValue>

        <Tooltip role="tooltip">Select sketch profiles or planar faces to extrude</Tooltip>

        <NavDock>
          <NavBar>
            {nav.map((n) => (
              <React.Fragment key={n.name}>
                {n.gap && <NavGap />}
                <NavButton $menu={n.menu} aria-label={n.name}>
                  <svg width="20" height="20" viewBox="0 0 20 20">{n.art}</svg>
                  {n.menu && <Caret $w={8} $h={5} />}
                </NavButton>
              </React.Fragment>
            ))}
          </NavBar>
        </NavDock>
        <SelectionHint>Chain</SelectionHint>
      </Canvas>

      <Timeline>
        {playback.map((p) => (
          <PlayButton key={p.name} aria-label={p.name}>
            <svg width="16" height="18" viewBox="0 -1 16 18"><path d={p.d} fill="#4a4a4a" /></svg>
          </PlayButton>
        ))}
        <TimelineTrack>
          <svg width="34" height="42" viewBox="0 0 34 42">
            <path d="M0 1H24V8H0Z" fill="#c4f26b" />
            <path d="M5 12H17M4 14V25M18 14V20M5 27H10" stroke="#555" fill="none" strokeWidth="1.300" />
            <path d="M2 10h3v3H2zM17 10h3v3h-3zM2 25h3v3H2z" fill="#2583d8" />
            <path d="M13 26L18 20L21 22L15 28Z" fill="#f5b04e" /><path d="M18 20L20 18L22 20L21 22Z" fill="#df4747" /><path d="M11 28L13 26L15 28Z" fill="#555" />
            <path d="M12 33h2v8h-2z" fill="#c4c4c4" />
            <path d="M19 3H33V9L28 14V41H25V14L19 9Z" fill="#666" />
          </svg>
        </TimelineTrack>
        <PlainButton aria-label="Timeline settings"><Gear size={19} /></PlainButton>
      </Timeline>
    </AppWindow>
  );
}

export default function App() {
  return (
    <>
      <GlobalStyle />
      <Slide>
        <Figures>
          <ModelWindow />
          <Detail>
            <DetailScene />
            <DetailFront><BoxDialog m={enlarged} /></DetailFront>
          </Detail>
        </Figures>
        <Caption>
          Same as the pen pot design it starts with a box.
          <br />
          size Length 200mm by 110mm Width and 40mm high.
        </Caption>
        <Credit>Rob Roach : Declutter Desk Organisers</Credit>
        <StepBadge>
          <StepNumber>1</StepNumber>
          <StepTitle>Stackable Storage</StepTitle>
        </StepBadge>
      </Slide>
    </>
  );
}
